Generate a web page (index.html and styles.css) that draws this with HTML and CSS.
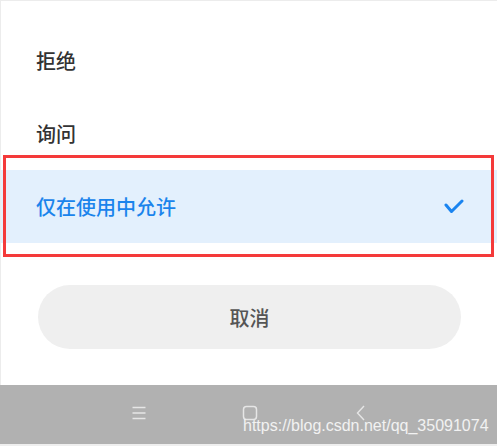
FILE: index.html
```html
<!DOCTYPE html>
<html lang="zh">
<head>
<meta charset="utf-8">
<link rel="stylesheet" href="styles.css">
</head>
<body>
<div class="screen">
  <div class="sheet">
    <ul class="options">
      <li class="option">拒绝</li>
      <li class="option">询问</li>
      <li class="option selected">
        <span>仅在使用中允许</span>
        <svg class="check" width="20" height="16" viewBox="0 0 20 16"><polyline points="2,6 7.5,12.5 18,2" fill="none" stroke="#1a84f0" stroke-width="3" stroke-linecap="round" stroke-linejoin="round"/></svg>
      </li>
    </ul>
    <div class="highlight-box"></div>
    <div class="actions">
      <button class="cancel">取消</button>
    </div>
  </div>
  <div class="navbar">
    <svg class="nav-icon" width="16" height="16" viewBox="0 0 16 16"><path d="M1.5 2.5h13M1.5 8h13M1.5 13.5h13" stroke="#e6e6e6" stroke-width="1.3" fill="none"/></svg>
    <svg class="nav-icon" width="16" height="16" viewBox="0 0 16 16"><rect x="1.5" y="1.5" width="13" height="13" rx="3" stroke="#e6e6e6" stroke-width="1.5" fill="none"/></svg>
    <svg class="nav-icon" width="16" height="16" viewBox="0 0 16 16"><path d="M11 1 L4.5 8 L11 15" stroke="#e6e6e6" stroke-width="1.4" fill="none"/></svg>
    <span class="watermark">https://blog.csdn.net/qq_35091074</span>
  </div>
</div>
</body>
</html>
```

FILE: styles.css
```css
html, body {
  margin: 0;
  padding: 0;
  background: #ffffff;
}
.screen {
  width: 497px;
  height: 446px;
  display: flex;
  flex-direction: column;
  position: relative;
  overflow: hidden;
  font-family: "Noto Sans CJK SC", "Noto Sans", sans-serif;
}
.sheet {
  height: 385px;
  border-top: 1px solid #ececec;
  border-left: 1px solid #ececec;
  box-sizing: border-box;
  background: #fff;
  position: relative;
}
.options {
  list-style: none;
  margin: 0;
  padding: 23px 0 0 0;
}
.option {
  height: 73px;
  display: flex;
  align-items: center;
  justify-content: space-between;
  padding: 0 33px 0 35px;
  font-size: 20px;
  font-weight: 500;
  color: #333333;
}
.option.selected {
  background: #e3f0fd;
  color: #1a84ec;
}
.check {
  display: block;
}
.highlight-box {
  position: absolute;
  left: 2px;
  top: 154px;
  width: 491px;
  height: 102px;
  box-sizing: border-box;
  border: 3px solid #f43a3a;
}
.actions {
  padding: 42px 36px 0 37px;
}
.cancel {
  display: block;
  width: 100%;
  height: 64px;
  border: none;
  border-radius: 32px;
  background: #efefef;
  color: #555555;
  font-family: "Noto Sans CJK SC", "Noto Sans", sans-serif;
  font-size: 20px;
  font-weight: 500;
  padding: 0;
}
.navbar {
  height: 59px;
  background: #b1b1b1;
  border-bottom: 2px solid #efefef;
  display: flex;
  align-items: center;
  padding-left: 131px;
  gap: 95px;
  position: relative;
}
.nav-icon {
  display: block;
  margin-top: -4px;
}
.watermark {
  position: absolute;
  left: 243px;
  top: 31px;
  font-family: "Liberation Sans", Arial, sans-serif;
  font-size: 16px;
  line-height: 20px;
  color: #f2f2f2;
  white-space: nowrap;
}
```
